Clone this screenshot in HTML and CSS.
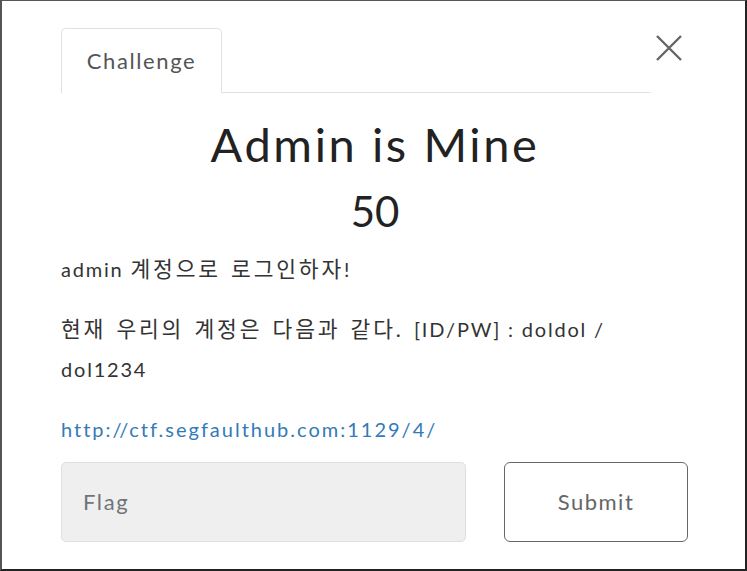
FILE: index.html
```html
<!DOCTYPE html>
<html lang="ko">
<head>
<meta charset="utf-8">
<title>Admin is Mine</title>
<link rel="stylesheet" href="styles.css">
</head>
<body>
<div class="frame">
  <div class="modal">
    <div class="header">
      <div class="nav">
        <div class="tab">Challenge</div>
      </div>
      <button class="close" aria-label="Close">
        <svg width="26" height="26" viewBox="0 0 26 26"><path d="M1 1 L25 25 M25 1 L1 25" stroke="#666" stroke-width="2.4" fill="none"/></svg>
      </button>
    </div>
    <h2 class="title">Admin is Mine</h2>
    <h3 class="value">50</h3>
    <div class="desc">
      <p>admin <span class="ko">계정으로 로그인하자</span>!</p>
      <p><span class="ko">현재 우리의 계정은 다음과 같다. </span>[ID/PW] : doldol / dol1234</p>
      <p><a href="#">http://ctf.segfaulthub.com:1129/4/</a></p>
    </div>
    <div class="form">
      <input class="flag" type="text" placeholder="Flag">
      <button class="submit">Submit</button>
    </div>
  </div>
</div>
</body>
</html>
```

FILE: styles.css
```css
* { box-sizing: border-box; }
html, body { margin: 0; padding: 0; background: #fff; }
.frame {
  width: 747px;
  height: 571px;
  border-top: 1px solid #555;
  border-left: 2px solid #555;
  border-right: 2px solid #222;
  border-bottom: 2px solid #222;
  font-family: Lato, "Noto Sans CJK KR", sans-serif;
  color: #333;
  overflow: hidden;
}
.modal {
  padding-left: 59px;
  width: 687px;
}
.header {
  display: flex;
  align-items: flex-start;
  padding-top: 27px;
}
.nav {
  width: 590px;
  border-bottom: 1px solid #dee2e6;
  display: flex;
}
.tab {
  width: 161px;
  height: 65px;
  border: 1px solid #dee2e6;
  border-bottom: none;
  border-radius: 5px 5px 0 0;
  margin-bottom: -1px;
  background: #fff;
  display: flex;
  align-items: center;
  justify-content: center;
  font-size: 22px;
  letter-spacing: 1.6px;
  color: #555;
  padding-bottom: 2px;
}
.close {
  margin-left: 5px;
  margin-top: 7px;
  padding: 0;
  border: none;
  background: none;
  width: 26px;
  height: 26px;
  display: flex;
}
.title {
  margin: 23px 0 0;
  text-align: center;
  font-weight: 400;
  font-size: 47px;
  line-height: 1.2;
  color: #222;
  letter-spacing: 2.6px;
}
.value {
  margin: 14px 0 0;
  text-align: center;
  font-weight: 400;
  font-size: 42px;
  line-height: 1.2;
  color: #222;
}
.desc {
  margin-top: 12px;
  padding-right: 30px;
  font-size: 20px;
  line-height: 40px;
  letter-spacing: 1.8px;
  color: #333;
}
.desc .ko {
  font-size: 21.5px;
  letter-spacing: 2.8px;
  word-spacing: 2px;
}
.desc p { margin: 0 0 20px; }
.desc p:last-child { margin-bottom: 13px; }
.desc a { color: #337ab7; text-decoration: none; letter-spacing: 2px; }
.form {
  display: flex;
  gap: 38px;
}
.flag {
  width: 405px;
  height: 80px;
  background: #efefef;
  border: 1px solid #dcdfe3;
  border-radius: 5px;
  padding: 0 21px;
  font-family: Lato, sans-serif;
  font-size: 22px;
  letter-spacing: 1.6px;
  color: #333;
}
.flag::placeholder { color: #707479; }
.submit {
  width: 184px;
  height: 80px;
  background: #fff;
  border: 1px solid #666;
  border-radius: 6px;
  font-family: Lato, sans-serif;
  font-size: 22px;
  letter-spacing: 1.5px;
  color: #666;
}
```
